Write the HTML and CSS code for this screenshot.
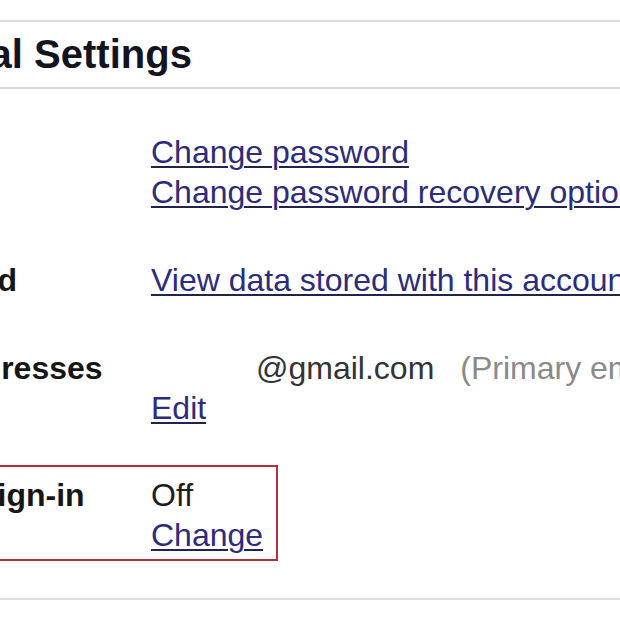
FILE: index.html
```html
<!DOCTYPE html>
<html lang="en">
<head>
<meta charset="utf-8">
<title>Personal Settings</title>
<link rel="stylesheet" href="styles.css">
</head>
<body>
<div class="page">
  <div class="section-head">
    <h2 class="title">Personal Settings</h2>
  </div>
  <div class="rows">
    <div class="row">
      <div class="label">Security</div>
      <div class="value">
        <a href="#" class="link">Change password</a><br>
        <a href="#" class="link">Change password recovery options</a>
      </div>
    </div>
    <div class="row">
      <div class="label">Dashboard</div>
      <div class="value">
        <a href="#" class="link">View data stored with this account</a>
      </div>
    </div>
    <div class="row">
      <div class="label">Email addresses</div>
      <div class="value">
        <span class="redacted"></span><span class="email">@gmail.com</span><span class="note">(Primary email)</span><br>
        <a href="#" class="link">Edit</a>
      </div>
    </div>
    <div class="row highlight">
      <div class="label">Multiple sign-in</div>
      <div class="value">
        <span class="plain">Off</span><br>
        <a href="#" class="link">Change</a>
      </div>
    </div>
  </div>
  <div class="section-foot"></div>
</div>
</body>
</html>
```

FILE: styles.css
```css
html, body {
  margin: 0;
  padding: 0;
  background: #ffffff;
}

body {
  width: 620px;
  height: 620px;
  overflow: hidden;
  font-family: "Liberation Sans", Arial, sans-serif;
  color: #151515;
}

.page {
  margin-left: -150px;
  width: 1100px;
  padding-top: 20px;
}

.section-head {
  border-top: 2px solid #dcdcdc;
  border-bottom: 2px solid #d8d8d8;
  padding: 8px 0 9px 4px;
}

.title {
  margin: 0;
  font-size: 40px;
  line-height: 48px;
  font-weight: bold;
  color: #141420;
}

.rows {
  display: flex;
  flex-direction: column;
  align-items: flex-start;
  padding-top: 43px;
}

.row {
  display: flex;
  font-size: 32px;
  line-height: 40px;
}

.row + .row {
  margin-top: 48px;
}

.label {
  width: 301px;
  flex: none;
  font-weight: bold;
  color: #161616;
}

.value {
  white-space: nowrap;
}

.link {
  color: #2c2c7c;
  text-decoration: underline;
  text-decoration-color: #22224e;
  text-decoration-thickness: 2px;
  text-underline-offset: 3px;
}

.redacted {
  display: inline-block;
  width: 105px;
}

.email {
  color: #333333;
}

.note {
  color: #8a8a8a;
  margin-left: 26px;
}

.plain {
  color: #1e1e1e;
}

.row.highlight {
  margin-top: 37px;
  margin-left: -12px;
  padding: 8px 13px 4px 10px;
  border: 2px solid #b0303e;
}

.section-foot {
  margin-top: 37px;
  border-top: 2px solid #dedede;
}
```
